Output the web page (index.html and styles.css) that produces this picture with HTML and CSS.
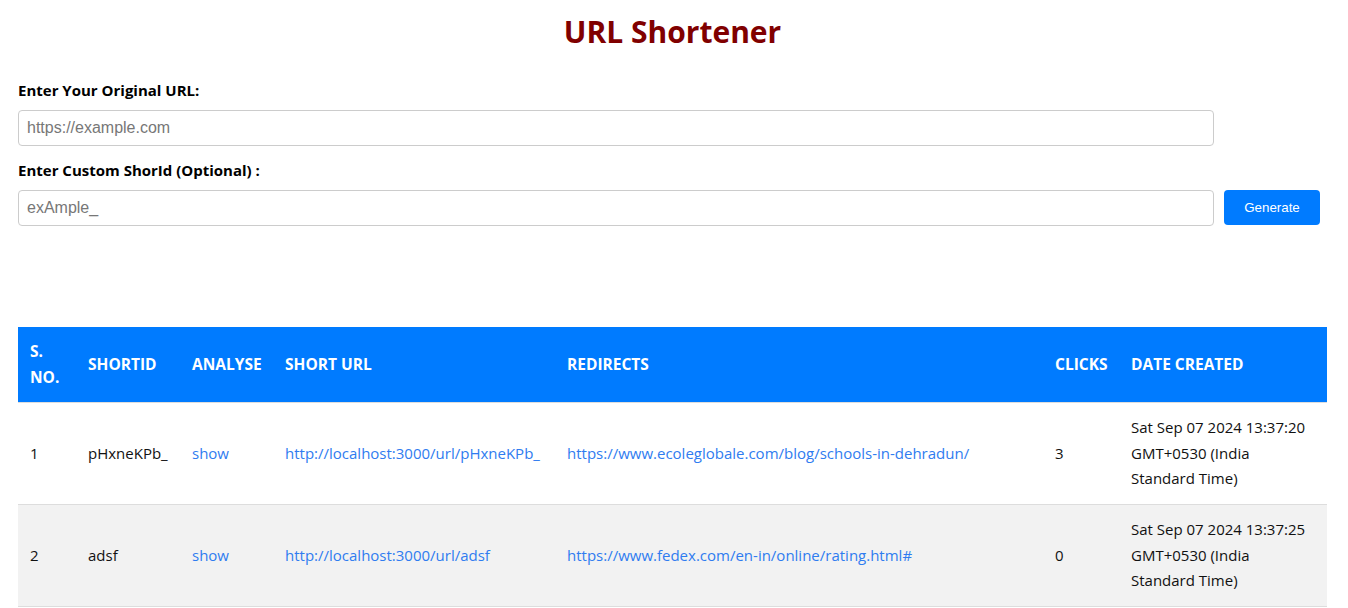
FILE: index.html
```html
<!DOCTYPE html>
<html lang="en">
<head>
<meta charset="utf-8">
<title>URL Shortener</title>
<link rel="stylesheet" href="styles.css">
</head>
<body>
<div class="page">
  <h1 class="title">URL Shortener</h1>
  <form class="form">
    <div class="field">
      <label class="label" for="url">Enter Your Original URL:</label>
      <div class="row">
        <input class="input" id="url" type="text" placeholder="https://example.com">
      </div>
    </div>
    <div class="field">
      <label class="label" for="sid">Enter Custom ShorId (Optional) :</label>
      <div class="row">
        <input class="input" id="sid" type="text" placeholder="exAmple_">
        <button class="btn" type="button">Generate</button>
      </div>
    </div>
  </form>

  <table class="table">
    <colgroup>
      <col class="c-no"><col class="c-id"><col class="c-an"><col class="c-short"><col class="c-red"><col class="c-clicks"><col class="c-date">
    </colgroup>
    <thead>
      <tr>
        <th>S. No.</th>
        <th>ShortId</th>
        <th>Analyse</th>
        <th>Short URL</th>
        <th>Redirects</th>
        <th>Clicks</th>
        <th>Date Created</th>
      </tr>
    </thead>
    <tbody>
      <tr>
        <td>1</td>
        <td>pHxneKPb_</td>
        <td><a class="link" href="#">show</a></td>
        <td><a class="link" href="#">http://localhost:3000/url/pHxneKPb_</a></td>
        <td><a class="link" href="#">https://www.ecoleglobale.com/blog/schools-in-dehradun/</a></td>
        <td>3</td>
        <td>Sat Sep 07 2024 13:37:20 GMT+0530 (India Standard Time)</td>
      </tr>
      <tr class="alt">
        <td>2</td>
        <td>adsf</td>
        <td><a class="link" href="#">show</a></td>
        <td><a class="link" href="#">http://localhost:3000/url/adsf</a></td>
        <td><a class="link" href="#">https://www.fedex.com/en-in/online/rating.html#</a></td>
        <td>0</td>
        <td>Sat Sep 07 2024 13:37:25 GMT+0530 (India Standard Time)</td>
      </tr>
    </tbody>
  </table>
</div>
</body>
</html>
```

FILE: styles.css
```css
html, body {
  margin: 0;
  padding: 0;
  background: #fff;
}

body {
  font-family: "Open Sans", "Noto Sans", sans-serif;
  color: #111;
}

.page {
  padding: 0 21px 0 18px;
}

.title {
  margin: 12px 0 0;
  font-size: 30px;
  line-height: 40px;
  font-weight: 700;
  text-align: center;
  color: #800000;
}

.form {
  margin-top: 28px;
  display: flex;
  flex-direction: column;
  gap: 14px;
}

.label {
  display: block;
  font-size: 15px;
  line-height: 20px;
  font-weight: 700;
  color: #000;
  margin-bottom: 10px;
}

.row {
  display: flex;
  gap: 10px;
  align-items: flex-start;
}

.input {
  box-sizing: border-box;
  width: calc(100% - 113px);
  height: 36px;
  padding: 0 8px;
  border: 1px solid #ccc;
  border-radius: 4px;
  font-family: "Liberation Sans", Arial, sans-serif;
  font-size: 16px;
  color: #333;
  outline: none;
}

.input::placeholder {
  color: #777;
}

.btn {
  box-sizing: border-box;
  width: 96px;
  height: 35px;
  border: 0;
  border-radius: 4px;
  background: #007bff;
  color: #fff;
  font-family: "Liberation Sans", Arial, sans-serif;
  font-size: 13.33px;
  cursor: pointer;
}

.table {
  margin-top: 101px;
  width: 100%;
  border-collapse: collapse;
  table-layout: fixed;
  font-size: 15px;
  line-height: 25.6px;
}

.c-no { width: 58px; }
.c-id { width: 104px; }
.c-an { width: 93px; }
.c-short { width: 282px; }
.c-red { width: 488px; }
.c-clicks { width: 76px; }
.c-date { width: 208px; }

.table th,
.table td {
  padding: 12px;
  text-align: left;
  vertical-align: middle;
  border-bottom: 1px solid #ddd;
}

.table th {
  background: #007bff;
  color: #fff;
  font-weight: 700;
  text-transform: uppercase;
  font-size: 15.5px;
}

.table td {
  color: #111;
}

.alt td {
  background: #f2f2f2;
}

.link {
  color: #2f7cf0;
  text-decoration: none;
}
```
